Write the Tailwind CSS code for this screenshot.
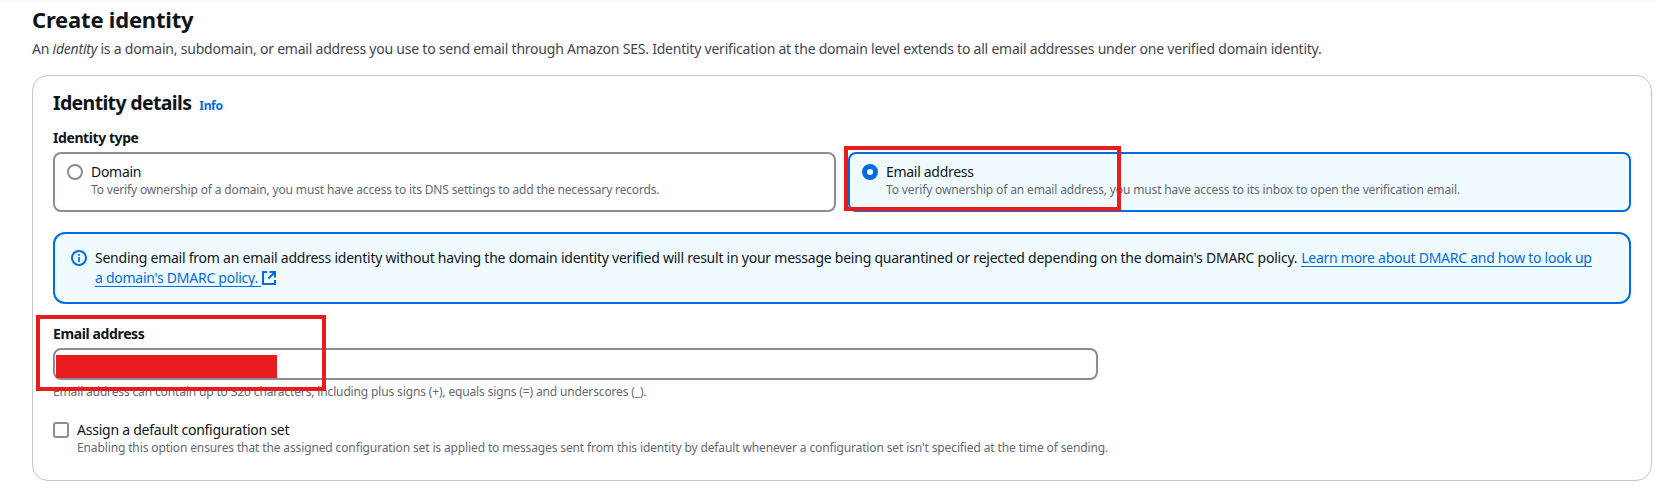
<!DOCTYPE html>
<html lang="en">
<head>
<meta charset="utf-8">
<title>Create identity</title>
<script src="https://cdn.jsdelivr.net/npm/@tailwindcss/browser@4"></script>
</head>
<body class="bg-white font-['Noto_Sans',sans-serif] text-[14px] leading-5 text-[#0f141a]">
<main class="relative h-[488px] overflow-hidden bg-linear-to-b from-[#f6f6f7] to-white to-[3px] pl-8 pr-[3px] pt-1 whitespace-nowrap">
  <h1 class="h-[31px] text-[22px] font-bold leading-[30px] tracking-[-0.2px]">Create identity</h1>
  <p class="mt-1 h-5 tracking-[-0.222px] text-[#424650]">An <em>identity</em> is a domain, subdomain, or email address you use to send email through Amazon SES. Identity verification at the domain level extends to all email addresses under one verified domain identity.</p>

  <section class="mt-4 h-[406px] rounded-2xl border border-[#c6c6cd] bg-white px-5">
    <div class="flex h-[38px] items-baseline gap-2 pt-[15px]">
      <h2 class="text-[19.5px] font-bold leading-6 tracking-[-0.65px]">Identity details</h2>
      <a class="text-[12px] font-bold leading-4 tracking-[-0.35px] text-[#006ce0]">Info</a>
    </div>

    <h3 class="mt-[14px] font-bold tracking-[-0.42px]">Identity type</h3>
    <div class="mt-1 grid grid-cols-2 gap-3">
      <div class="flex h-[60px] gap-2 rounded-lg border-2 border-[#8c8c94] px-3 pt-2">
        <span class="mt-0.5 size-4 shrink-0 rounded-full border-2 border-[#8c8c94]"></span>
        <div>
          <div class="tracking-[-0.3px]">Domain</div>
          <div class="text-[12px] leading-4 tracking-[-0.155px] text-[#656871]">To verify ownership of a domain, you must have access to its DNS settings to add the necessary records.</div>
        </div>
      </div>
      <div class="flex h-[60px] gap-2 rounded-lg border-2 border-[#006ce0] bg-[#f0fbff] px-3 pt-2">
        <span class="mt-0.5 size-4 shrink-0 rounded-full border-5 border-[#006ce0] bg-white"></span>
        <div>
          <div class="tracking-[-0.3px]">Email address</div>
          <div class="text-[12px] leading-4 tracking-[-0.138px] text-[#656871]">To verify ownership of an email address, you must have access to its inbox to open the verification email.</div>
        </div>
      </div>
    </div>

    <div class="mt-5 flex h-[72px] gap-2 rounded-xl border-2 border-[#006ce0] bg-[#f0fbff] pl-4 pt-[14px]">
      <svg class="mt-0.5 size-4 shrink-0" viewBox="0 0 16 16" fill="none" stroke="#006ce0" stroke-width="2"><circle cx="8" cy="8" r="7"/><path stroke-width="1.7" d="M8 12V7M8 5.8V4"/></svg>
      <div>
        <div class="flex h-5 gap-1 tracking-[-0.236px]">
          <span>Sending email from an email address identity without having the domain identity verified will result in your message being quarantined or rejected depending on the domain's DMARC policy.</span>
          <a class="h-[19px] border-b border-[#006ce0] tracking-[-0.27px] text-[#006ce0]">Learn more about DMARC and how to look up</a>
        </div>
        <a class="flex h-5 tracking-[-0.26px] text-[#006ce0]">
          <span class="h-[19px] w-[166px] border-b border-[#006ce0]">a domain's DMARC policy.</span>
          <svg class="ml-px mt-[3px] size-[14px]" viewBox="0 0 14 14" fill="none" stroke="#006ce0" stroke-width="2"><path d="M5 1H1v12h12V9M7.5 1H13v5.5M13 1L6.5 7.5"/></svg>
        </a>
      </div>
    </div>

    <div class="mt-5 font-bold tracking-[-0.38px]">Email address</div>
    <div class="mt-1 h-8 w-[1045px] rounded-lg border-2 border-[#8c8c94]"></div>
    <div class="mt-1 text-[12px] leading-4 tracking-[-0.145px] text-[#656871]">Email address can contain up to 320 characters, including plus signs (+), equals signs (=) and underscores (_).</div>

    <div class="mt-5 flex gap-2">
      <span class="mt-0.5 size-4 shrink-0 rounded-[3px] border-2 border-[#8c8c94]"></span>
      <div>
        <div class="tracking-[-0.24px]">Assign a default configuration set</div>
        <div class="text-[12px] leading-4 tracking-[-0.127px] text-[#656871]">Enabling this option ensures that the assigned configuration set is applied to messages sent from this identity by default whenever a configuration set isn't specified at the time of sending.</div>
      </div>
    </div>
  </section>

  <!-- Annotation marks -->
  <div class="absolute left-[844px] top-[146px] h-[65px] w-[277px] border-4 border-[#e81c1c]"></div>
  <div class="absolute left-[36px] top-[315px] h-[76px] w-[290px] border-4 border-[#e81c1c]"></div>
  <div class="absolute left-[56px] top-[355px] h-[23px] w-[221px] bg-[#e81c1c]"></div>
</main>
</body>
</html>
